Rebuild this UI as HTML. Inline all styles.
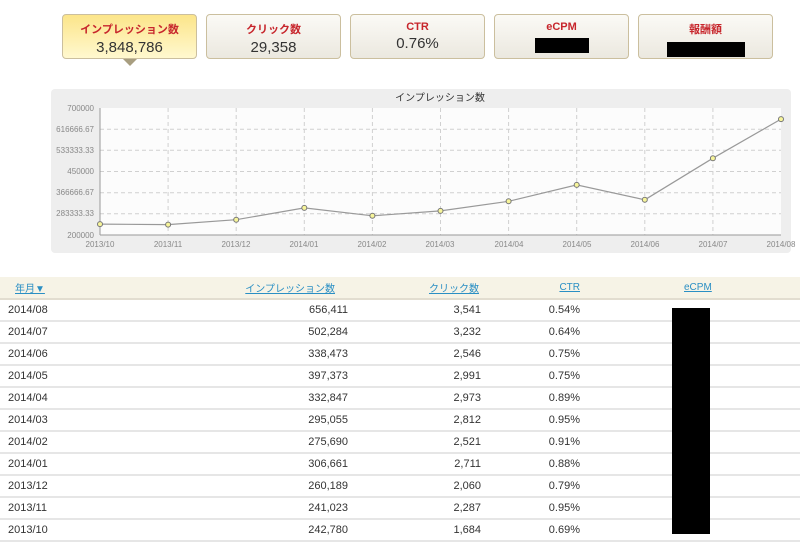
<!DOCTYPE html>
<html><head><meta charset="utf-8"><style>
body{margin:0;width:800px;height:557px;background:#fff;font-family:"Liberation Sans","Noto Sans CJK JP",sans-serif;position:relative;overflow:hidden}
.b{position:absolute;top:14px;width:133px;height:43px;border:1px solid #cbbf9e;border-radius:4px;background:linear-gradient(#fbfaf6,#ebe8df);text-align:center}
.b .t{color:#c7262c;font-size:11px;font-weight:bold;margin-top:6px}
.b .v{color:#333;font-size:15px;margin-top:2px}
.b.a{background:linear-gradient(#fce58a,#fff8cf)}
.blk{display:inline-block;background:#000;width:54px;height:15px;margin-top:5px}
table{position:absolute;top:277px;left:0;width:800px;border-collapse:collapse;font-size:11px;color:#333;table-layout:fixed}
th{background:#f6f3e6;height:21px;padding:0;font-weight:normal;color:#2a8fc4;text-decoration:underline;font-size:10px;border-bottom:2px solid #e2ddd0}
td{height:20px;padding:0;border-bottom:2px solid #e6e6e6}
.r{text-align:right}
</style></head><body>
<div class="b a" style="left:62px"><div class="t">インプレッション数</div><div class="v">3,848,786</div></div>
<div style="position:absolute;left:123px;top:59px;width:0;height:0;border-left:7px solid transparent;border-right:7px solid transparent;border-top:7px solid #a89e80"></div>
<div class="b" style="left:206px"><div class="t">クリック数</div><div class="v">29,358</div></div>
<div class="b" style="left:350px"><div class="t">CTR</div><div class="v">0.76%</div></div>
<div class="b" style="left:494px"><div class="t">eCPM</div><div class="blk"></div></div>
<div class="b" style="left:638px"><div class="t">報酬額</div><div class="blk" style="width:78px"></div></div>
<svg style="position:absolute;left:0;top:0" width="800" height="260" font-family="Liberation Sans, sans-serif">
<rect x="51" y="89" width="740" height="164" rx="4" fill="#eeeeee"/>
<rect x="100" y="108" width="681" height="127" fill="#fcfcfc"/>
<text x="440" y="101" font-size="10" fill="#333" text-anchor="middle" font-family="Liberation Sans, Noto Sans CJK JP, sans-serif">インプレッション数</text>
<g stroke="#d0d0d0" stroke-dasharray="4,3">
<line x1="100" x2="781" y1="129.2" y2="129.2"/><line x1="100" x2="781" y1="150.3" y2="150.3"/><line x1="100" x2="781" y1="171.5" y2="171.5"/><line x1="100" x2="781" y1="192.7" y2="192.7"/><line x1="100" x2="781" y1="213.8" y2="213.8"/>
<line x1="168.1" x2="168.1" y1="108" y2="235"/><line x1="236.2" x2="236.2" y1="108" y2="235"/><line x1="304.3" x2="304.3" y1="108" y2="235"/><line x1="372.4" x2="372.4" y1="108" y2="235"/><line x1="440.5" x2="440.5" y1="108" y2="235"/><line x1="508.6" x2="508.6" y1="108" y2="235"/><line x1="576.7" x2="576.7" y1="108" y2="235"/><line x1="644.8" x2="644.8" y1="108" y2="235"/><line x1="712.9" x2="712.9" y1="108" y2="235"/>
</g>
<line x1="100" x2="100" y1="108" y2="235" stroke="#999"/><line x1="100" x2="781" y1="235" y2="235" stroke="#999"/>
<g font-size="8" fill="#888" text-anchor="end">
<text x="94" y="111">700000</text><text x="94" y="132">616666.67</text><text x="94" y="153">533333.33</text><text x="94" y="174">450000</text><text x="94" y="195">366666.67</text><text x="94" y="216">283333.33</text><text x="94" y="238">200000</text></g>
<g font-size="8" fill="#888" text-anchor="middle">
<text x="100" y="247">2013/10</text><text x="168" y="247">2013/11</text><text x="236" y="247">2013/12</text><text x="304" y="247">2014/01</text><text x="372" y="247">2014/02</text><text x="440" y="247">2014/03</text><text x="509" y="247">2014/04</text><text x="577" y="247">2014/05</text><text x="645" y="247">2014/06</text><text x="713" y="247">2014/07</text><text x="781" y="247">2014/08</text></g>
<polyline fill="none" stroke="#999" stroke-width="1.2" points="100,224.1 168.1,224.6 236.2,219.7 304.3,207.9 372.4,215.8 440.5,210.9 508.6,201.3 576.7,184.9 644.8,199.8 712.9,158.2 781,119.1"/>
<g fill="#f7f59a" stroke="#777">
<circle cx="100" cy="224.1" r="2.5"/><circle cx="168.1" cy="224.6" r="2.5"/><circle cx="236.2" cy="219.7" r="2.5"/><circle cx="304.3" cy="207.9" r="2.5"/><circle cx="372.4" cy="215.8" r="2.5"/><circle cx="440.5" cy="210.9" r="2.5"/><circle cx="508.6" cy="201.3" r="2.5"/><circle cx="576.7" cy="184.9" r="2.5"/><circle cx="644.8" cy="199.8" r="2.5"/><circle cx="712.9" cy="158.2" r="2.5"/><circle cx="781" cy="119.1" r="2.5"/></g>
</svg>
<table>
<colgroup><col style="width:200px"><col style="width:148px"><col style="width:133px"><col style="width:99px"><col></colgroup>
<tr><th style="text-align:left;padding-left:15px">年月▼</th><th class="r" style="padding-right:13px">インプレッション数</th><th class="r" style="padding-right:2px">クリック数</th><th class="r">CTR</th><th style="padding-right:singular;text-align:left;padding-left:104px">eCPM</th></tr>
<tr><td style="padding-left:8px">2014/08</td><td class="r">656,411</td><td class="r">3,541</td><td class="r">0.54%</td><td></td></tr>
<tr><td style="padding-left:8px">2014/07</td><td class="r">502,284</td><td class="r">3,232</td><td class="r">0.64%</td><td></td></tr>
<tr><td style="padding-left:8px">2014/06</td><td class="r">338,473</td><td class="r">2,546</td><td class="r">0.75%</td><td></td></tr>
<tr><td style="padding-left:8px">2014/05</td><td class="r">397,373</td><td class="r">2,991</td><td class="r">0.75%</td><td></td></tr>
<tr><td style="padding-left:8px">2014/04</td><td class="r">332,847</td><td class="r">2,973</td><td class="r">0.89%</td><td></td></tr>
<tr><td style="padding-left:8px">2014/03</td><td class="r">295,055</td><td class="r">2,812</td><td class="r">0.95%</td><td></td></tr>
<tr><td style="padding-left:8px">2014/02</td><td class="r">275,690</td><td class="r">2,521</td><td class="r">0.91%</td><td></td></tr>
<tr><td style="padding-left:8px">2014/01</td><td class="r">306,661</td><td class="r">2,711</td><td class="r">0.88%</td><td></td></tr>
<tr><td style="padding-left:8px">2013/12</td><td class="r">260,189</td><td class="r">2,060</td><td class="r">0.79%</td><td></td></tr>
<tr><td style="padding-left:8px">2013/11</td><td class="r">241,023</td><td class="r">2,287</td><td class="r">0.95%</td><td></td></tr>
<tr><td style="padding-left:8px">2013/10</td><td class="r">242,780</td><td class="r">1,684</td><td class="r">0.69%</td><td></td></tr>
</table>
<div style="position:absolute;left:672px;top:308px;width:38px;height:226px;background:#000"></div>
</body></html>
